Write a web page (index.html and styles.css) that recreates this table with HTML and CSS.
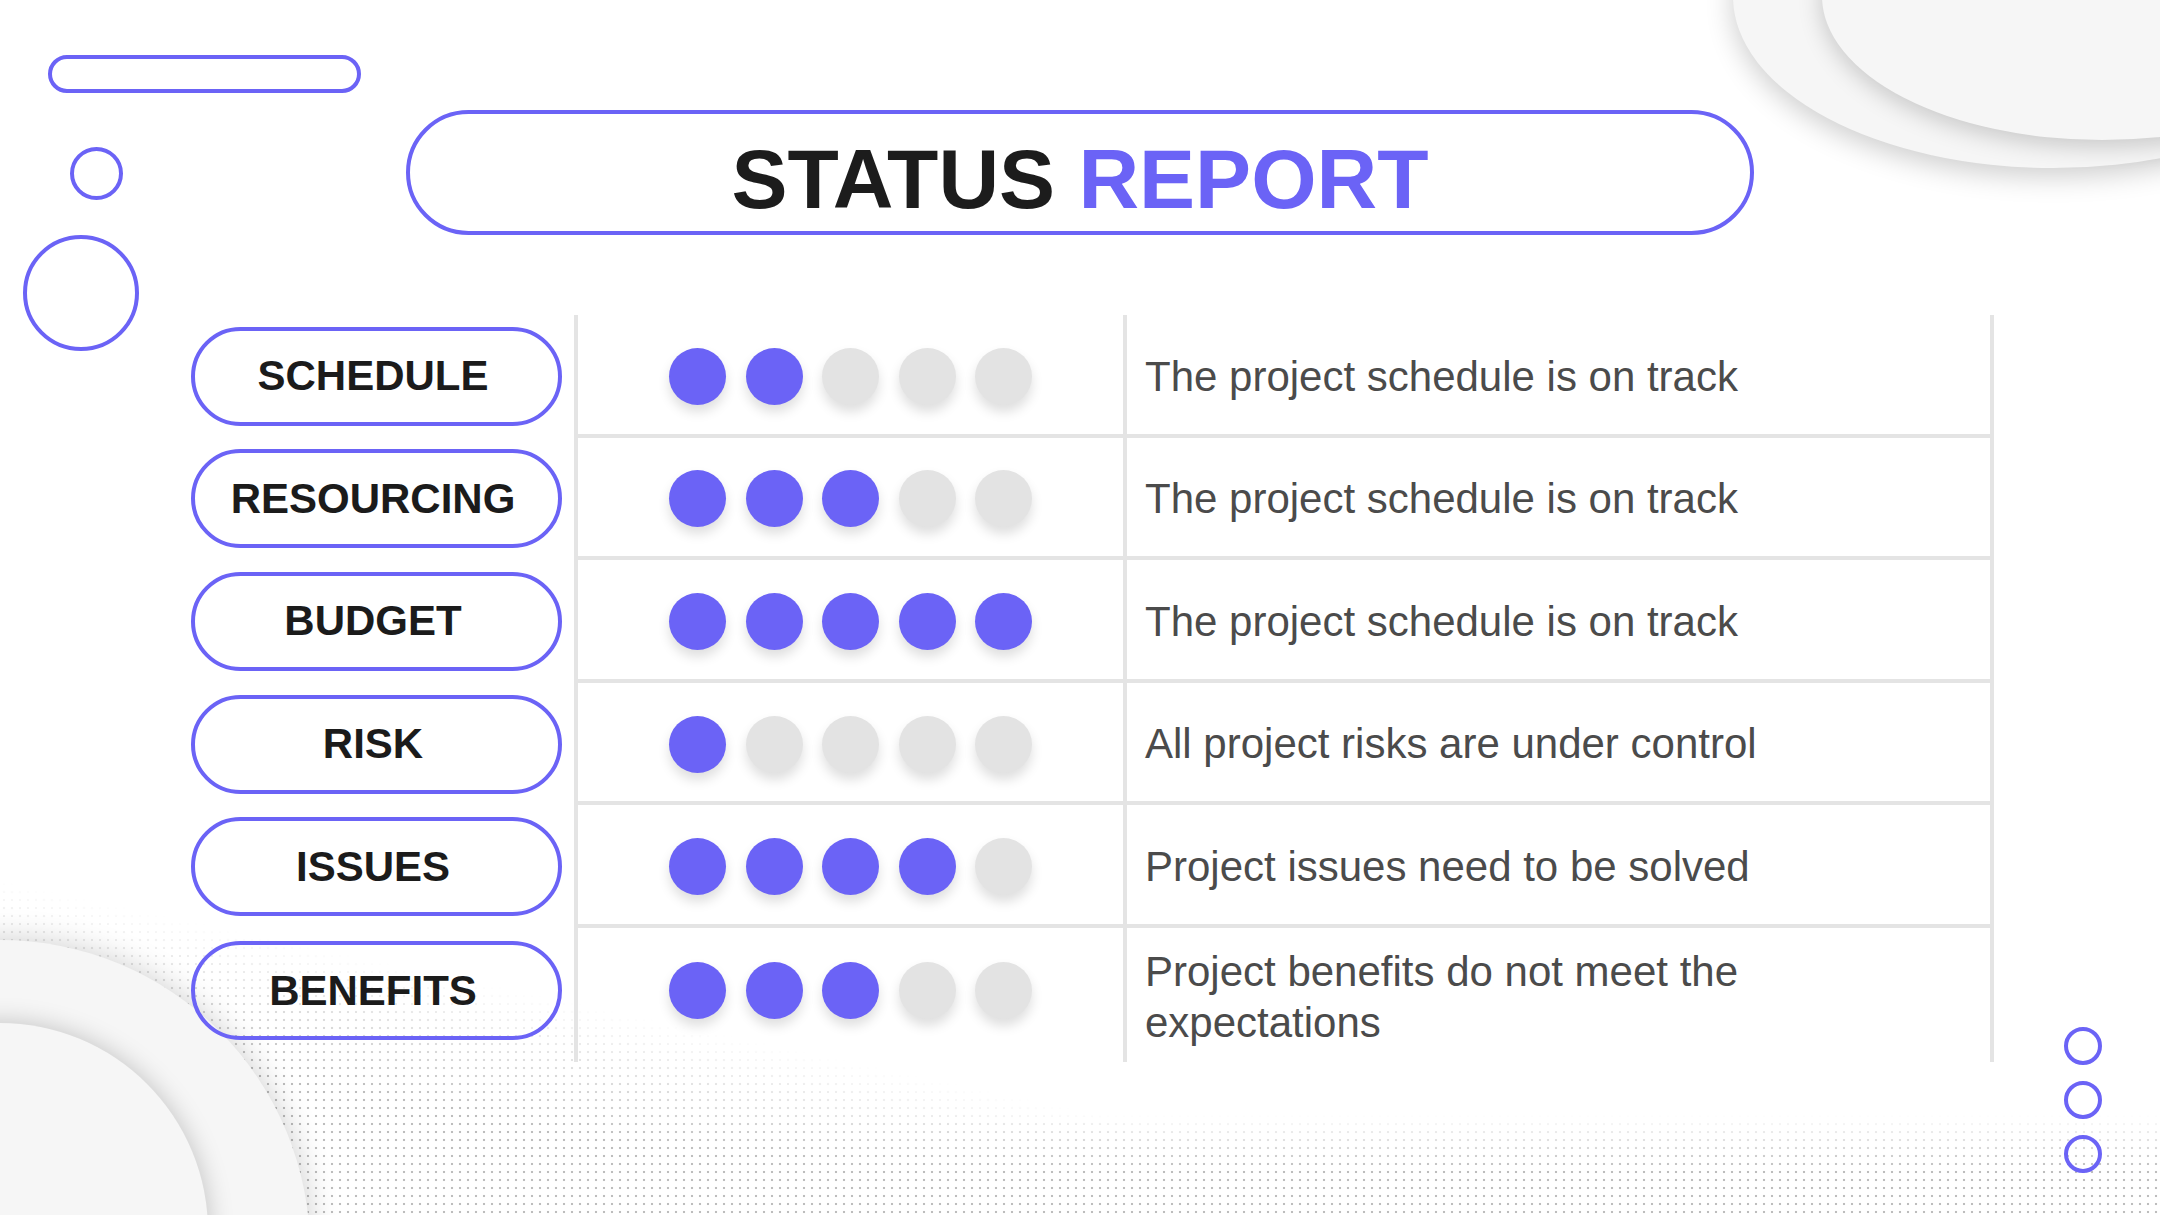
FILE: index.html
```html
<!DOCTYPE html>
<html lang="en">
<head>
<meta charset="utf-8">
<title>Status Report</title>
<link rel="stylesheet" href="styles.css">
</head>
<body>
<div class="slide">
  <div class="bg-dots"></div>
  <div class="blob blob-tr-outer"></div>
  <div class="blob blob-tr-inner"></div>
  <div class="blob blob-bl-outer"></div>
  <div class="blob blob-bl-inner"></div>

  <div class="deco deco-bar"></div>
  <div class="deco deco-ring-sm"></div>
  <div class="deco deco-ring-lg"></div>
  <div class="ring-stack">
    <div class="ring"></div>
    <div class="ring"></div>
    <div class="ring"></div>
  </div>

  <header class="head">
    <h1 class="title"><span class="title-text">STATUS <span class="accent">REPORT</span></span></h1>
  </header>

  <section class="table">
    <div class="label"><div class="pill">SCHEDULE</div></div>
    <div class="dots"><span class="dot on"></span><span class="dot on"></span><span class="dot"></span><span class="dot"></span><span class="dot"></span></div>
    <div class="desc"><p class="desc-text">The project schedule is on track</p></div>

    <div class="label"><div class="pill">RESOURCING</div></div>
    <div class="dots"><span class="dot on"></span><span class="dot on"></span><span class="dot on"></span><span class="dot"></span><span class="dot"></span></div>
    <div class="desc"><p class="desc-text">The project schedule is on track</p></div>

    <div class="label"><div class="pill">BUDGET</div></div>
    <div class="dots"><span class="dot on"></span><span class="dot on"></span><span class="dot on"></span><span class="dot on"></span><span class="dot on"></span></div>
    <div class="desc"><p class="desc-text">The project schedule is on track</p></div>

    <div class="label"><div class="pill">RISK</div></div>
    <div class="dots"><span class="dot on"></span><span class="dot"></span><span class="dot"></span><span class="dot"></span><span class="dot"></span></div>
    <div class="desc"><p class="desc-text">All project risks are under control</p></div>

    <div class="label"><div class="pill">ISSUES</div></div>
    <div class="dots"><span class="dot on"></span><span class="dot on"></span><span class="dot on"></span><span class="dot on"></span><span class="dot"></span></div>
    <div class="desc"><p class="desc-text">Project issues need to be solved</p></div>

    <div class="label is-last"><div class="pill">BENEFITS</div></div>
    <div class="dots is-last"><span class="dot on"></span><span class="dot on"></span><span class="dot on"></span><span class="dot"></span><span class="dot"></span></div>
    <div class="desc is-last"><p class="desc-text">Project benefits do not meet the expectations</p></div>
  </section>
</div>
</body>
</html>
```
FILE: styles.css
```css
html, body {
  margin: 0;
  padding: 0;
  background: #ffffff;
}

.slide {
  position: relative;
  width: 2160px;
  height: 1215px;
  overflow: hidden;
  background: #ffffff;
  font-family: "Liberation Sans", Arial, sans-serif;
}

/* ---------- background decorations ---------- */
.bg-dots {
  position: absolute;
  inset: 0;
  z-index: 0;
  background-image: radial-gradient(circle, #bdbdbd 0 1px, transparent 1.6px);
  background-size: 8px 8px;
  -webkit-mask-image:
    linear-gradient(192deg, transparent 80%, #000 88%),
    linear-gradient(180deg, transparent 1115px, #000 1170px);
  mask-image:
    linear-gradient(192deg, transparent 80%, #000 88%),
    linear-gradient(180deg, transparent 1115px, #000 1170px);
}

.blob {
  position: absolute;
  z-index: 0;
  border-radius: 50%;
  background: #f6f6f6;
}

.blob-tr-outer {
  left: 1733px;
  top: -175px;
  width: 640px;
  height: 343px;
  box-shadow: 0 8px 28px rgba(0, 0, 0, 0.2);
}

.blob-tr-inner {
  left: 1822px;
  top: -148px;
  width: 560px;
  height: 288px;
  box-shadow: 0 6px 24px rgba(0, 0, 0, 0.2);
}

.blob-bl-outer {
  left: -310px;
  top: 940px;
  width: 620px;
  height: 620px;
  box-shadow: 0 0 32px rgba(0, 0, 0, 0.2);
}

.blob-bl-inner {
  left: -208px;
  top: 1023px;
  width: 416px;
  height: 416px;
  box-shadow: 0 0 26px rgba(0, 0, 0, 0.22);
}

.deco {
  position: absolute;
  z-index: 1;
  box-sizing: border-box;
  border: 4px solid #6b63f6;
}

.deco-bar {
  left: 48px;
  top: 55px;
  width: 313px;
  height: 38px;
  border-radius: 19px;
}

.deco-ring-sm {
  left: 70px;
  top: 147px;
  width: 53px;
  height: 53px;
  border-radius: 50%;
}

.deco-ring-lg {
  left: 23px;
  top: 235px;
  width: 116px;
  height: 116px;
  border-radius: 50%;
}

.ring-stack {
  position: absolute;
  z-index: 1;
  left: 2064px;
  top: 1027px;
  display: flex;
  flex-direction: column;
  gap: 16px;
}

.ring {
  width: 38px;
  height: 38px;
  box-sizing: border-box;
  border: 4px solid #6b63f6;
  border-radius: 50%;
}

/* ---------- header ---------- */
.head {
  position: relative;
  z-index: 2;
  padding: 110px 0 0 406px;
}

.title {
  margin: 0;
  width: 1348px;
  height: 125px;
  box-sizing: border-box;
  border: 4px solid #6b63f6;
  border-radius: 63px;
  display: flex;
  align-items: center;
  justify-content: center;
  padding-top: 12px;
  font-size: 84px;
  font-weight: 700;
  line-height: 1;
  color: #1c1c1c;
}

.accent {
  color: #6b63f6;
}

/* ---------- table ---------- */
.table {
  position: relative;
  z-index: 2;
  margin: 80px 0 0 191px;
  display: grid;
  grid-template-columns: 383px 549px 871px;
  grid-template-rows: repeat(5, 122.6px) 134px;
}

.label {
  display: flex;
  align-items: center;
}

.pill {
  width: 371px;
  height: 99px;
  box-sizing: border-box;
  border: 4px solid #6b63f6;
  border-radius: 50px;
  display: flex;
  align-items: center;
  justify-content: center;
  padding-right: 7px;
  font-size: 42px;
  font-weight: 700;
  color: #1b1b1b;
}

.dots {
  box-sizing: border-box;
  border-left: 4px solid #e4e4e4;
  border-bottom: 4px solid #e4e4e4;
  display: flex;
  align-items: center;
  justify-content: center;
  gap: 19.5px;
  padding-top: 4px;
}

.dot {
  width: 57px;
  height: 57px;
  border-radius: 50%;
  background: #e3e3e3;
  box-shadow: 0 7px 12px rgba(0, 0, 0, 0.13);
}

.dot.on {
  background: #6b63f6;
}

.desc {
  box-sizing: border-box;
  border-left: 4px solid #e4e4e4;
  border-right: 4px solid #e4e4e4;
  border-bottom: 4px solid #e4e4e4;
  display: flex;
  align-items: center;
  padding-left: 18px;
  padding-top: 4px;
}

.desc-text {
  margin: 0;
  max-width: 640px;
  font-size: 42px;
  line-height: 1.22;
  color: #4b4b4b;
}

.dots.is-last,
.desc.is-last {
  border-bottom: none;
}

.label.is-last,
.dots.is-last {
  padding-top: 0;
  padding-bottom: 8px;
}
```
